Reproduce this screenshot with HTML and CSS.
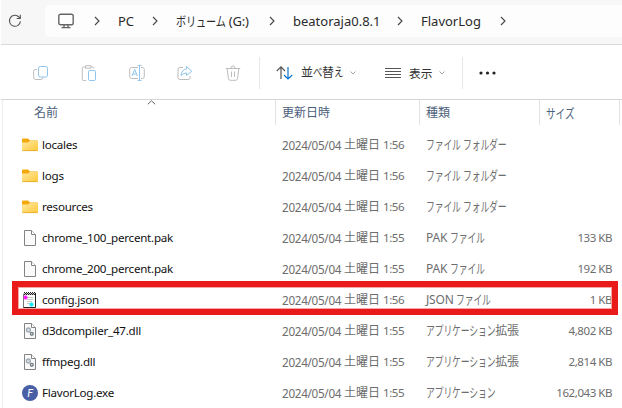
FILE: index.html
```html
<!DOCTYPE html>
<html lang="ja">
<head>
<meta charset="utf-8">
<title>FlavorLog</title>
<link rel="stylesheet" href="styles.css">
</head>
<body>
<svg width="0" height="0" class="defs">
  <defs>
    <linearGradient id="fg" x1="0" y1="0" x2="1" y2="1"><stop offset="0" stop-color="#ffe9a4"/><stop offset="1" stop-color="#ffc838"/></linearGradient>
    <symbol id="folder" viewBox="0 0 16 16"><path d="M0 2.700Q0 1.500 1.2 1.500H6l2 2h6.8Q16 3.500 16 4.700V9H0z" fill="#f3a90a"/><path d="M0 5.500h6l2-1.500h7q1 0 1 1V13q0 1-1 1H1q-1 0-1-1z" fill="url(#fg)"/><path d="M.5 13.600h15" stroke="#e6ad27" stroke-width=".9"/></symbol>
    <symbol id="page" viewBox="0 0 16 16"><path d="M2.500.5h7l4 4v11h-11z" fill="#fafafa" stroke="#838383"/><path d="M9.500.5v4h4" fill="#fff" stroke="#838383"/></symbol>
    <symbol id="dll" viewBox="0 0 16 16"><use href="#page"/><circle cx="6.400" cy="7" r="2" fill="#d7dde2" stroke="#a3adb5" stroke-width="1.400"/><circle cx="9.800" cy="10.800" r="1.400" fill="#fff" stroke="#707b83" stroke-width="1.400"/></symbol>
    <symbol id="note" viewBox="0 0 16 16"><path d="M1.500 2h12v13.500h-12z" fill="#fff" stroke="#777"/><path d="M13.500 2v13.500h-12" fill="none" stroke="#222"/><path d="M2 .5h12M2 2.500h12" stroke="#222" stroke-dasharray="1 1"/><path d="M3 1.500h11" stroke="#222" stroke-dasharray="1 1"/><path d="M5 5.500h6M5 7.500h6M5 9.500h5M5 11.500h3" stroke="#bbb" stroke-width=".8"/><path d="M3.500 3.500v4M1.500 5.500h4" stroke="#f0f" stroke-width="2"/><path d="M9.500 10.500v4M7.500 12.500h4" stroke="#00e5f2" stroke-width="2.200"/></symbol>
    <symbol id="chev" viewBox="0 0 6 10"><path d="M1 1l4 4-4 4" fill="none" stroke="#444" stroke-width="1.1"/></symbol>
    <symbol id="down" viewBox="0 0 6 4"><path d="M.5.5L3 3 5.500.5" fill="none" stroke="#999" stroke-width=".9"/></symbol>
  </defs>
</svg>
<div class="window">
  <header class="nav">
    <svg class="refresh" width="14" height="14" viewBox="0 0 14 14" fill="none" stroke="#555" stroke-width="1.1"><path d="M12.400 7.200a5.500 5.500 0 1 1-1.500-4.200l1.300 1.300"/><path d="M12.300.8v3.700H8.700"/></svg>
    <div class="address">
      <svg class="pc" width="16" height="16" viewBox="0 0 16 16" fill="none" stroke="#666" stroke-width="1.400"><rect x=".8" y="1.200" width="14.400" height="10.600" rx="1.800"/><path d="M6 12v2.500M10 12v2.500M3.500 14.600h9"/></svg>
      <svg class="chev c1"><use href="#chev"/></svg><span class="crumb p1">PC</span>
      <svg class="chev c2"><use href="#chev"/></svg><span class="crumb p2"><span class="kana">ボリューム</span> (G:)</span>
      <svg class="chev c3"><use href="#chev"/></svg><span class="crumb p3">beatoraja0.8.1</span>
      <svg class="chev c4"><use href="#chev"/></svg><span class="crumb p4">FlavorLog</span>
      <svg class="chev c5"><use href="#chev"/></svg>
    </div>
  </header>
  <div class="toolbar">
    <div class="actions">
      <svg viewBox="0 0 16 16"><path class="g" d="M4 4.500H2.500q-1.800 0-1.800 1.800v6q0 2.200 2.200 2.200h5q1.800 0 1.800-1.800"/><rect class="b" x="5.500" y="1.500" width="9" height="10.500" rx="1.800"/></svg>
      <svg viewBox="0 0 16 16"><path class="g" d="M5 15.500H2.500q-1.200 0-1.200-1.200v-11Q1.300 2 2.500 2H4.500M10 2h1.600q1.200 0 1.200 1.500M4.500.7H10v2.500H4.500z"/><rect class="b" x="7.500" y="5.500" width="7" height="10" rx="1.300"/></svg>
      <svg viewBox="0 0 16 16"><path class="g" d="M9 2.500H2.700Q.7 2.500.7 4.500v7q0 2 2 2H9M12 2.500h1.300q2 0 2 2v7q0 2-2 2H12"/><path class="b" d="M3 11l2.700-6.500L8.400 11M4 9h3.500M8.500.6h4M8.500 15.400h4M10.500.6v14.800"/></svg>
      <svg viewBox="0 0 16 16"><path class="g" d="M6 2.500H3Q1 2.500 1 4.500v8q0 2 2 2h8q2 0 2-2V11"/><path class="b" d="M9.500 1.500l5.300 4.700-5.300 4.300V8Q6 8 4 10.500 4.700 4.500 9.500 4z"/></svg>
      <svg viewBox="0 0 16 16"><path class="g" d="M.8 3.500h14.400M2.200 3.500l1.200 10q.2 1.800 2 1.800h5.200q1.800 0 2-1.800l1.200-10M6 3Q6 1 8 1t2 2M6.500 6.500V12M9.500 6.500V12"/></svg>
    </div>
    <div class="menus">
      <svg class="sort" width="17" height="14" viewBox="0 0 17 14" fill="none" stroke-width="1.200"><path stroke="#555" d="M5 13V1M.8 5L5 .9 9 5"/><path stroke="#0b76d0" d="M12 1v12M8 9l4 4 4.200-4"/></svg>
      <span class="m1">並<i>べ</i>替<i>え</i></span>
      <svg class="down d1"><use href="#down"/></svg>
      <svg class="list" width="16" height="12" viewBox="0 0 16 12"><path d="M0 1.500h16M0 4.500h16M0 7.500h16M0 10.500h16" stroke="#555" stroke-width="1"/></svg>
      <span class="m2">表示</span>
      <svg class="down d2"><use href="#down"/></svg>
    </div>
    <svg class="more" width="18" height="4" viewBox="0 0 18 4" fill="#222"><circle cx="2" cy="2" r="1.600"/><circle cx="8.500" cy="2" r="1.600"/><circle cx="15" cy="2" r="1.600"/></svg>
  </div>
  <main class="files">
    <div class="row head"><div class="name">名前<svg class="up" width="9" height="5" viewBox="0 0 9 5"><path d="M.8 4.300L4.500.8l3.700 3.500" fill="none" stroke="#666"/></svg></div><div>更新日時</div><div>種類</div><div><span class="kana">サイズ</span></div></div>
    <div class="row"><div class="name"><svg><use href="#folder"/></svg><span>locales</span></div><div class="date"><b>2024/05/04</b><b>土曜日</b><b>1:56</b></div><div class="type"><span class="kana">ファイル フォルダー</span></div><div class="size"></div></div>
    <div class="row"><div class="name"><svg><use href="#folder"/></svg><span>logs</span></div><div class="date"><b>2024/05/04</b><b>土曜日</b><b>1:56</b></div><div class="type"><span class="kana">ファイル フォルダー</span></div><div class="size"></div></div>
    <div class="row"><div class="name"><svg><use href="#folder"/></svg><span>resources</span></div><div class="date"><b>2024/05/04</b><b>土曜日</b><b>1:56</b></div><div class="type"><span class="kana">ファイル フォルダー</span></div><div class="size"></div></div>
    <div class="row"><div class="name"><svg><use href="#page"/></svg><span>chrome_100_percent.pak</span></div><div class="date"><b>2024/05/04</b><b>土曜日</b><b>1:55</b></div><div class="type">PAK <span class="kana">ファイル</span></div><div class="size">133 KB</div></div>
    <div class="row"><div class="name"><svg><use href="#page"/></svg><span>chrome_200_percent.pak</span></div><div class="date"><b>2024/05/04</b><b>土曜日</b><b>1:55</b></div><div class="type">PAK <span class="kana">ファイル</span></div><div class="size">192 KB</div></div>
    <div class="row marked"><div class="name"><svg><use href="#note"/></svg><span>config.json</span></div><div class="date"><b>2024/05/04</b><b>土曜日</b><b>1:56</b></div><div class="type">JSON <span class="kana">ファイル</span></div><div class="size">1 KB</div></div>
    <div class="row"><div class="name"><svg><use href="#dll"/></svg><span>d3dcompiler_47.dll</span></div><div class="date"><b>2024/05/04</b><b>土曜日</b><b>1:55</b></div><div class="type"><span class="kana app">アプリケーション</span>拡張</div><div class="size">4,802 KB</div></div>
    <div class="row"><div class="name"><svg><use href="#dll"/></svg><span>ffmpeg.dll</span></div><div class="date"><b>2024/05/04</b><b>土曜日</b><b>1:55</b></div><div class="type"><span class="kana app">アプリケーション</span>拡張</div><div class="size">2,814 KB</div></div>
    <div class="row"><div class="name"><span class="exe">F</span><span>FlavorLog.exe</span></div><div class="date"><b>2024/05/04</b><b>土曜日</b><b>1:55</b></div><div class="type"><span class="kana app">アプリケーション</span></div><div class="size">162,043 KB</div></div>
  </main>
</div>
</body>
</html>
```
FILE: styles.css
```css
*, *::after { box-sizing: border-box; }
body { margin: 0; background: #fff; overflow: hidden; font: 12px/16px "Noto Sans", "Noto Sans CJK JP", sans-serif; color: #111; }
.defs { position: absolute; }
svg { flex: none; display: block; }
.window { width: 622px; height: 408px; padding-left: 1px; overflow: hidden; }
.nav { height: 45px; background: #f7f7f7; border-bottom: 1px solid #d9d9d9; display: flex; padding-top: 5px; }
.refresh { margin: 9px 0 0 7px; }
.address { margin-left: 23px; flex: 1; height: 32px; background: #fdfdfd; border-radius: 5px 0 0 5px; display: flex; align-items: center; color: #2a2a2a; white-space: nowrap; }
.pc { margin-left: 13px; }
.chev { width: 6px; height: 10px; }
.c1 { margin-left: 20px; }
.crumb { font-size: 13px; }
.p1 { width: 34px; margin-left: 18px; }
.p2 { width: 93px; margin-left: 18px; letter-spacing: -.2px; }
.p3 { width: 104px; margin-left: 18px; }
.p4 { width: 79px; margin-left: 18px; }
.toolbar { height: 55px; border-bottom: 1px solid #d5d5d5; display: flex; align-items: center; padding-top: 1px; }
.actions { width: 259px; height: 32px; border-right: 1px solid #e7e7e7; display: flex; align-items: center; gap: 32px; padding-left: 32px; }
.actions svg { width: 16px; height: 16px; fill: none; }
.g { stroke: #bdbdbd; }
.b { stroke: #8fc5ec; }
.menus { width: 203px; height: 32px; border-right: 1px solid #e7e7e7; display: flex; align-items: center; color: #333; }
.sort { margin-left: 16px; }
.m1 { margin-left: 8px; width: 43px; white-space: nowrap; }
.m1 i { font-style: normal; display: inline-block; transform: scaleX(.78); transform-origin: left; margin-right: -3px; }
.down { width: 6px; height: 4px; }
.d1 { margin-left: 6px; }
.list { margin-left: 29px; }
.m2 { margin-left: 8px; width: 24px; font-size: 11.7px; }
.d2 { margin-left: 6px; }
.more { margin-left: 16px; }
.files { margin-left: 1px; border-left: 1px solid #eee; height: 308px; }
.row { position: relative; height: 31px; display: grid; grid-template-columns: 279px 144px 120px 66px; align-items: center; white-space: nowrap; color: #6d6d6d; }
.row.head { height: 29px; grid-template-columns: 273px 144px 120px 80px; align-items: start; color: #4c607a; }
.head > div { height: 25px; padding: 5px 0 0 6px; border-right: 1px solid #e3e3e3; }
.head > .name { padding-left: 31px; display: block; position: relative; color: #4c607a; font-size: 12px; letter-spacing: 0; }
.up { position: absolute; left: 144px; top: 0; }
.name { display: flex; align-items: center; color: #111; padding-left: 19px; gap: 4px; font-size: 11.6px; letter-spacing: -.25px; }
.name > svg:not(.up) { width: 16px; height: 16px; }
.date { display: flex; }
.date b { font-weight: 400; }
.date b:first-child { width: 62px; font-size: 11.7px; letter-spacing: -.3px; }
.date b:nth-child(2) { width: 39px; }
.date b:last-child { font-size: 11.6px; letter-spacing: -.45px; }
.kana { display: inline-block; font-size: 13px; transform: scaleX(.68); transform-origin: left; }
.type { letter-spacing: -.2px; }
.app { margin-right: -33px; }
.head .kana { transform: scaleX(.74); }
.p2 .kana { transform: scaleX(.78); margin-right: -14px; }
.size { text-align: right; font-size: 11.5px; letter-spacing: -.45px; }
.exe { width: 16px; height: 16px; border-radius: 50%; background: #4a60a6; color: #fff; font: italic 11px/16px Lato, sans-serif; text-align: center; }
.marked::after { content: ""; position: absolute; left: 9px; top: -3px; width: 606px; height: 34px; border: 6px solid #e81a1a; box-shadow: inset 0 0 0 1px #f6a4a4; }
```
